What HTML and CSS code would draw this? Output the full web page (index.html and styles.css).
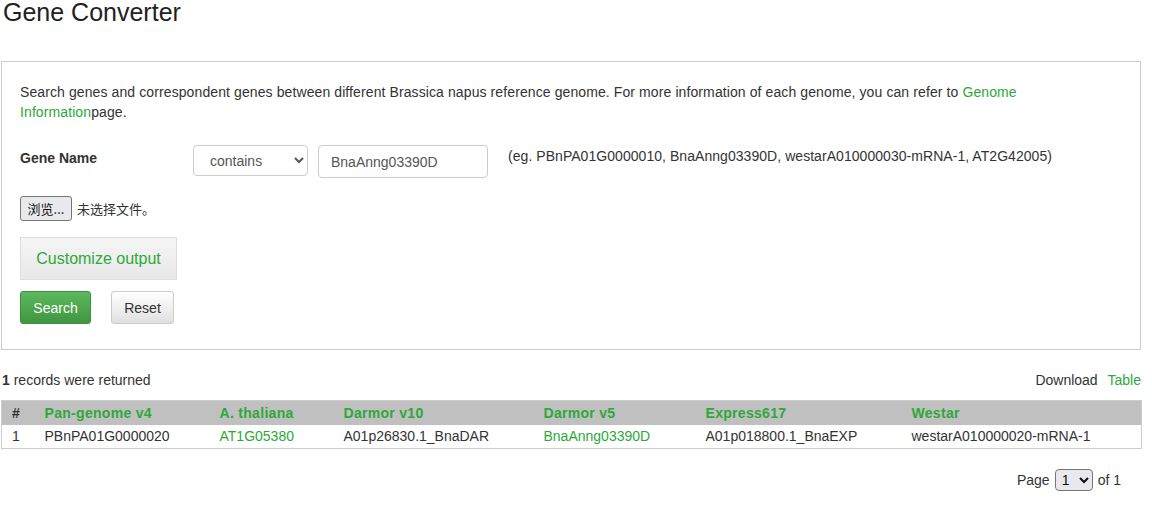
FILE: index.html
```html
<!DOCTYPE html>
<html>
<head>
<meta charset="utf-8">
<link rel="stylesheet" href="styles.css">
</head>
<body>
<div class="page">
  <h1 class="title">Gene Converter</h1>
  <div class="panel">
    <p class="intro">Search genes and correspondent genes between different Brassica napus reference genome. For more information of each genome, you can refer to <a href="#" class="link">Genome Information</a>page.</p>
    <div class="field-row">
      <label class="field-label">Gene Name</label>
      <select class="select-op"><option>contains</option></select>
      <input class="text-input" type="text" value="BnaAnng03390D">
      <span class="example">(eg. PBnPA01G0000010, BnaAnng03390D, westarA010000030-mRNA-1, AT2G42005)</span>
    </div>
    <div class="file-row">
      <button class="file-btn">浏览...</button>
      <span class="file-text">未选择文件。</span>
    </div>
    <button class="btn-customize">Customize output</button>
    <div class="actions">
      <button class="btn btn-search">Search</button>
      <button class="btn btn-reset">Reset</button>
    </div>
  </div>
  <div class="result-bar">
    <span><b>1</b> records were returned</span>
    <span class="download">Download <a href="#" class="link">Table</a></span>
  </div>
  <table class="results">
    <colgroup>
      <col class="c-num"><col class="c-pan"><col class="c-at"><col class="c-d10"><col class="c-d5"><col class="c-exp"><col class="c-wes">
    </colgroup>
    <thead>
      <tr><th class="num">#</th><th>Pan-genome v4</th><th>A. thaliana</th><th>Darmor v10</th><th>Darmor v5</th><th>Express617</th><th>Westar</th></tr>
    </thead>
    <tbody>
      <tr><td>1</td><td>PBnPA01G0000020</td><td><a href="#" class="link">AT1G05380</a></td><td>A01p26830.1_BnaDAR</td><td><a href="#" class="link">BnaAnng03390D</a></td><td>A01p018800.1_BnaEXP</td><td>westarA010000020-mRNA-1</td></tr>
    </tbody>
  </table>
  <div class="pager">
    <span>Page</span>
    <select class="page-select"><option>1</option></select>
    <span>of 1</span>
  </div>
</div>
</body>
</html>
```

FILE: styles.css
```css
* { box-sizing: border-box; }
html, body { margin: 0; padding: 0; background: #fff; }
body {
  font-family: "Liberation Sans", Arial, "Noto Sans CJK SC", sans-serif;
  font-size: 14px;
  line-height: 20px;
  color: #333;
}
.page { width: 1141px; padding-left: 1px; }
.title {
  margin: 0;
  padding-left: 2px;
  font-size: 25px;
  font-weight: normal;
  line-height: 24px;
  color: #222;
  height: 61px;
}
.link { color: #2da83a; text-decoration: none; }
.panel {
  border: 1px solid #ccc;
  padding: 20px 19px 25px 18px;
  height: 289px;
}
.intro { margin: 0; line-height: 20px; width: 1015px; letter-spacing: 0.1px; }
.field-row {
  display: flex;
  align-items: flex-start;
  margin-top: 23px;
  height: 33px;
}
.field-label { width: 173px; font-weight: bold; margin-top: 3px; }
.select-op {
  width: 115px;
  height: 31px;
  border: 1px solid #ccc;
  border-radius: 4px;
  background: #fff;
  color: #555;
  font-family: inherit;
  font-size: 14px;
  padding: 0 12px;
}
.text-input {
  margin-left: 10px;
  width: 170px;
  height: 33px;
  border: 1px solid #ccc;
  border-radius: 4px;
  font-family: inherit;
  font-size: 14px;
  color: #555;
  padding: 0 12px;
}
.example { margin-left: 20px; margin-top: 1px; letter-spacing: 0.05px; }
.file-row {
  display: flex;
  align-items: center;
  margin-top: 18px;
  height: 25px;
}
.file-btn {
  width: 52px;
  height: 25px;
  border: 1px solid #767676;
  border-radius: 3px;
  background: #e9e9ed;
  font-family: "Noto Sans CJK SC", sans-serif;
  font-size: 13px;
  color: #111;
  padding: 0;
}
.file-text { margin-left: 5px; font-family: "Noto Sans CJK SC", sans-serif; font-size: 13px; }
.btn-customize {
  display: block;
  margin-top: 16px;
  width: 157px;
  height: 43px;
  border: 1px solid #ddd;
  background: linear-gradient(#f5f5f5, #e8e8e8);
  color: #2da83a;
  font-family: inherit;
  font-size: 16px;
  padding: 0;
}
.actions { display: flex; gap: 20px; margin-top: 11px; }
.btn {
  height: 33px;
  border-radius: 3px;
  font-family: inherit;
  font-size: 14px;
  padding: 0 12px;
}
.btn-search {
  width: 71px;
  border: 1px solid #3e8f3e;
  background: linear-gradient(#5cb85c, #419641);
  color: #fff;
}
.btn-reset {
  width: 63px;
  border: 1px solid #ccc;
  background: linear-gradient(#fff, #e0e0e0);
  color: #333;
}
.result-bar {
  display: flex;
  justify-content: space-between;
  margin-top: 20px;
  padding-left: 1px;
  height: 20px;
}
.download .link { margin-left: 6px; }
.results {
  margin-top: 10px;
  width: 1140px;
  border-collapse: collapse;
  table-layout: fixed;
  border: 1px solid #ccc;
}
.c-num { width: 33px; }
.c-pan { width: 175px; }
.c-at { width: 124px; }
.c-d10 { width: 200px; }
.c-d5 { width: 162px; }
.c-exp { width: 206px; }
.c-wes { width: 240px; }
.results th {
  background: #c0c0c0;
  color: #2da83a;
  font-weight: bold;
  text-align: left;
  height: 24px;
  padding: 0 0 0 10px;
  letter-spacing: 0.3px;
}
.results th.num { color: #333; }
.results td {
  height: 24px;
  padding: 0 0 0 10px;
  background: #fff;
}
.pager {
  display: flex;
  justify-content: flex-end;
  align-items: center;
  gap: 5px;
  margin-top: 20px;
  padding-right: 20px;
}
.page-select {
  width: 38px;
  height: 22px;
  border: 1px solid #767676;
  border-radius: 4px;
  background: #e9e9ed;
  font-family: inherit;
  font-size: 14px;
  color: #111;
  padding: 0 2px;
}
```
